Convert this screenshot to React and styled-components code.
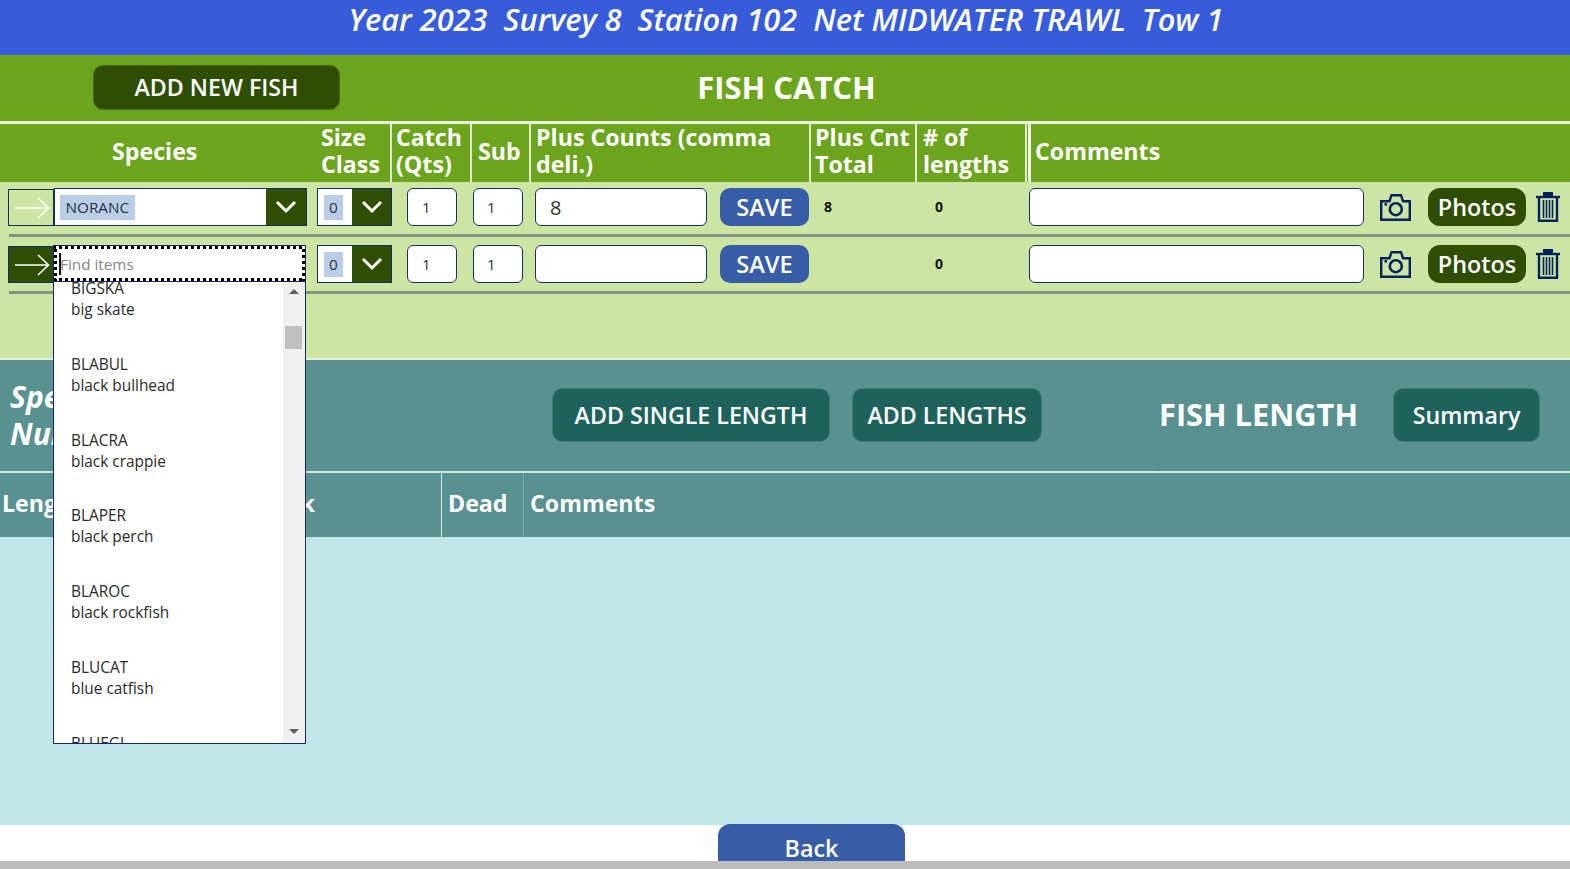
import React from "react";
import styled, { createGlobalStyle } from "styled-components";

const Global = createGlobalStyle`
  html, body { margin: 0; padding: 0; overflow: hidden; }
  body { font-family: "Open Sans", "Noto Sans", sans-serif; }
  * { box-sizing: border-box; }
`;

const Page = styled.div`
  position: relative;
  width: 1570px;
  height: 869px;
  overflow: hidden;
  background: #fff;
  display: flex;
  flex-direction: column;
`;

const TitleBar = styled.header`
  height: 55px;
  background: #375cdb;
  color: #fff;
  font-size: 30.8px;
  font-style: italic;
  font-weight: 600;
  text-align: center;
  line-height: 38px;
  padding-left: 2px;
  white-space: pre;
`;

const CatchBar = styled.div`
  height: 66px;
  background: #6ca41e;
  position: relative;
  display: flex;
  align-items: center;
  justify-content: center;
  padding: 0 0 2px 3px;
`;

const AddFish = styled.button`
  position: absolute;
  left: 93px;
  top: 10px;
  width: 247px;
  height: 45px;
  background: #2f4e03;
  color: #fff;
  border: 1px solid #4a6a1c;
  border-radius: 10px;
  font: 600 23.2px "Open Sans", sans-serif;
  padding: 0 0 2px;
`;

const BarTitle = styled.h1`
  margin: 0;
  color: #fff;
  font-size: 31px;
  font-weight: 700;
`;

const HeaderRow = styled.div`
  height: 61px;
  border-top: 3px solid #e8f2dc;
  background: #6ca41e;
  display: grid;
  grid-template-columns: 392px 80px 59px 280px 106px 110px 4px 1fr;
  color: #fff;
`;

const HeadCell = styled.div`
  border-right: ${(p) => (p.$plain ? "0" : "2px solid #dfeccb")};
  padding-left: ${(p) => p.$pad}px;
  padding-bottom: 6px;
  font-size: 23.2px;
  font-weight: 700;
  line-height: 27px;
  display: flex;
  align-items: center;
  white-space: pre;
`;

const SpeciesHead = styled(HeadCell)`
  display: grid;
  grid-template-columns: 321px 1fr;
  align-items: center;
`;

const SpeciesLabel = styled.div`
  padding-left: 112px;
`;

const HeadDivider = styled.div`
  margin-left: 1px;
  background: #f0f6e6;
`;

const Rows = styled.div`
  height: 176px;
  background: #cce5a3;
  padding-top: 6px;
`;

const Row = styled.div`
  height: 46px;
  padding-left: 8px;
  display: flex;
  align-items: flex-start;
`;

const Rule = styled.div`
  height: 3px;
  margin: 0 0 8px 9px;
  background: #83927a;
`;

const ArrowBox = styled.div`
  width: 46px;
  height: 37px;
  margin-top: 1px;
  padding-left: 2px;
  border: 1px solid #14305f;
  background: ${(p) => (p.$active ? "#2f4e03" : "#cce5a3")};
  display: flex;
  align-items: center;
  justify-content: center;
`;

const Combo = styled.div`
  width: ${(p) => p.$w}px;
  height: 38px;
  margin-left: ${(p) => p.$ml || 0}px;
  border: 1px solid #14305f;
  background: #fff;
  display: flex;
  align-items: center;
  justify-content: space-between;
`;

const Selected = styled.span`
  margin-left: ${(p) => p.$ml}px;
  padding: 0 ${(p) => p.$px}px;
  height: ${(p) => p.$h}px;
  line-height: ${(p) => p.$h}px;
  background: #b9cde6;
  color: #27323f;
  font-size: 15.3px;
`;

const ComboArrow = styled.div`
  width: ${(p) => p.$w}px;
  align-self: stretch;
  background: #2f4e03;
  display: flex;
  align-items: center;
  justify-content: center;
`;

const Spacer = styled.div`
  width: 253px;
`;

const SmallInput = styled.div`
  width: ${(p) => p.$w}px;
  height: 38px;
  margin-left: ${(p) => p.$ml}px;
  border: 1px solid #14305f;
  border-radius: 6px;
  background: #fff;
  color: #333;
  font-size: 15px;
  line-height: 37px;
  padding-left: ${(p) => p.$pl}px;
`;

const PlusInput = styled(SmallInput)`
  font-size: 20px;
`;

const SaveButton = styled.button`
  width: 89px;
  height: 38px;
  margin-left: 13px;
  border: 0;
  border-radius: 10px;
  background: #375da9;
  color: #fff;
  padding: 0;
  font: 600 23.6px "Open Sans", sans-serif;
`;

const Count = styled.div`
  width: ${(p) => p.$w}px;
  height: 38px;
  padding-left: ${(p) => p.$pl}px;
  color: #111;
  font-size: 14px;
  font-weight: 700;
  line-height: 37px;
`;

const IconSlot = styled.div`
  width: ${(p) => p.$w}px;
  margin-left: ${(p) => p.$ml}px;
  height: 38px;
  display: flex;
  align-items: center;
  justify-content: center;
`;

const PhotosButton = styled.button`
  width: 98px;
  height: 38px;
  margin-left: 17px;
  border: 0;
  border-radius: 12px;
  background: #2f4e03;
  color: #fff;
  padding: 0;
  font: 600 23.4px "Open Sans", sans-serif;
`;

const TealBand = styled.div`
  height: 113px;
  border-top: 2px solid #e5f2df;
  background: #58918f;
  display: flex;
  align-items: center;
  padding-bottom: 2px;
  color: #fff;
`;

const SpeciesNumber = styled.div`
  width: 552px;
  padding-left: 10px;
  font-size: 30px;
  font-weight: 700;
  font-style: italic;
  line-height: 37px;
  white-space: pre;
`;

const TealButton = styled.button`
  width: ${(p) => p.$w}px;
  height: 54px;
  margin-left: ${(p) => p.$ml || 0}px;
  border: 1px solid #3f7f78;
  border-radius: 10px;
  background: #1f625c;
  color: #fff;
  padding: 0;
  font: 600 23.2px "Open Sans", sans-serif;
`;

const BandTitle = styled.div`
  align-self: stretch;
  width: 240px;
  margin-left: 111px;
  margin-bottom: -2px;
  padding: 0 0 4px 5px;
  border-left: 1px solid #5e9694;
  display: flex;
  align-items: center;
  font-size: 30.8px;
  font-weight: 700;
  white-space: pre;
`;

const TableHead = styled.div`
  height: 66px;
  border-top: 2px solid #cfe6e1;
  background: #58918f;
  color: #fff;
  display: grid;
  grid-template-columns: 442px 82px 1fr;
`;

const TableCell = styled.div`
  border-right: ${(p) => (p.$line ? `1px solid ${p.$line}` : "0")};
  padding: 0 ${(p) => p.$pr || 0}px 4px ${(p) => p.$pl}px;
  font-size: 23.2px;
  font-weight: 700;
  display: flex;
  align-items: center;
  justify-content: space-between;
  white-space: pre;
`;

const TableBody = styled.div`
  height: 288px;
  background: #c1e6e7;
`;

const Footer = styled.div`
  flex: 1;
  position: relative;
  background: #fff;
`;

const BackButton = styled.button`
  position: absolute;
  left: 718px;
  top: -1px;
  width: 187px;
  height: 38px;
  border: 0;
  border-radius: 12px 12px 0 0;
  background: #375da9;
  color: #fff;
  padding: 8px 0 0;
  font: 600 23.3px "Open Sans", sans-serif;
`;

const GreyStrip = styled.div`
  position: absolute;
  left: 0;
  right: 0;
  bottom: 0;
  height: 8px;
  background: #bdbdbd;
`;

const Dropdown = styled.div`
  position: absolute;
  left: 53px;
  top: 245px;
  width: 253px;
  height: 499px;
  background: #fff;
  border: 1px solid #14246f;
  border-top: 0;
  display: flex;
  flex-direction: column;
`;

const SearchBox = styled.div`
  height: 37px;
  margin: 0 -1px;
  outline: 1px solid #14246f;
  outline-offset: -1px;
  background-color: #fff;
  background-image:
    repeating-linear-gradient(90deg, #000 0 3px, transparent 3px 6px),
    repeating-linear-gradient(90deg, #000 0 3px, transparent 3px 6px),
    repeating-linear-gradient(0deg, #000 0 3px, transparent 3px 6px),
    repeating-linear-gradient(0deg, #000 0 3px, transparent 3px 6px);
  background-size: 100% 4px, 100% 4px, 4px 100%, 4px 100%;
  background-position: 0 0, 0 100%, 0 0, 100% 0;
  background-repeat: no-repeat;
  color: #858585;
  font-size: 15.3px;
  line-height: 38px;
  padding-left: 7px;
  position: relative;
`;

const Caret = styled.span`
  position: absolute;
  left: 6px;
  top: 8px;
  width: 2px;
  height: 22px;
  background: #111;
`;

const ListArea = styled.div`
  flex: 1;
  min-height: 0;
  display: flex;
  overflow: hidden;
`;

const List = styled.div`
  flex: 1;
  overflow: hidden;
  padding: 0 0 0 17px;
`;

const ListScroll = styled.div`
  margin-top: -4px;
`;

const Item = styled.div`
  height: 75.8px;
  color: #2a2a2a;
  font-size: 15.4px;
  line-height: 21px;
  white-space: pre;
`;

const Scrollbar = styled.div`
  width: 22px;
  background: #f0f0f0;
  position: relative;
  display: flex;
  flex-direction: column;
  align-items: center;
  justify-content: space-between;
  padding: 7px 0 9px;
`;

const Thumb = styled.div`
  position: absolute;
  left: 2px;
  top: 44px;
  width: 17px;
  height: 23px;
  background: #c0c0c0;
`;

const Tri = styled.span`
  width: 0;
  height: 0;
  border-left: 5px solid transparent;
  border-right: 5px solid transparent;
  ${(p) => (p.$up ? "border-bottom: 5px solid #606060;" : "border-top: 5px solid #606060;")}
`;

const LongArrow = () => (
  <svg width="36" height="22" viewBox="0 0 36 22" fill="none" stroke="#fff" strokeWidth="1.6">
    <path d="M1 11H34.5M24 1l10.5 10L24 21" />
  </svg>
);

const Chevron = () => (
  <svg width="22" height="14" viewBox="0 0 22 14" fill="none" stroke="#fff" strokeWidth="3">
    <path d="M2 2l9 9 9-9" />
  </svg>
);

const Camera = () => (
  <svg width="31" height="27" viewBox="0 0 31 27" fill="none" stroke="#06215f" strokeWidth="2.4">
    <path d="M1.2 7.2H9.5L11.5 1.2H21L23 7.2H29.8V25.8H1.2Z" />
    <circle cx="15.8" cy="15.2" r="6" strokeWidth="2.6" />
    <rect x="4.5" y="9" width="2.6" height="2.6" fill="#06215f" stroke="none" />
  </svg>
);

const Trash = () => (
  <svg width="24" height="30" viewBox="0 0 24 30" fill="none" stroke="#06215f" strokeWidth="1.6">
    <path d="M0 5h24" strokeWidth="2.4" />
    <path d="M7 0h10v4H7z" fill="#06215f" stroke="none" />
    <path d="M3 5v23.8h18V5" strokeWidth="2.4" />
    <path d="M7.5 8v18M10.5 8v18M13.5 8v18M16.5 8v18" />
  </svg>
);

const species = [
  "BIGSKA\nbig skate",
  "BLABUL\nblack bullhead",
  "BLACRA\nblack crappie",
  "BLAPER\nblack perch",
  "BLAROC\nblack rockfish",
  "BLUCAT\nblue catfish",
  "BLUEGI\nbluegill",
];

const FishRow = ({ active, value, total }) => (
  <Row>
    <ArrowBox $active={active}><LongArrow /></ArrowBox>
    {active ? (
      <Spacer />
    ) : (
      <Combo $w={253}>
        <Selected $ml={5} $px={5.5} $h={25}>NORANC</Selected>
        <ComboArrow $w={40}><Chevron /></ComboArrow>
      </Combo>
    )}
    <Combo $w={75} $ml={10}>
      <Selected $ml={6} $px={5} $h={25}>0</Selected>
      <ComboArrow $w={39}><Chevron /></ComboArrow>
    </Combo>
    <SmallInput $w={50} $ml={15} $pl={14}>1</SmallInput>
    <SmallInput $w={50} $ml={16} $pl={13}>1</SmallInput>
    <PlusInput $w={172} $ml={12} $pl={14}>{value}</PlusInput>
    <SaveButton>SAVE</SaveButton>
    <Count $w={108} $pl={15}>{total}</Count>
    <Count $w={112} $pl={18}>0</Count>
    <SmallInput $w={335} $ml={0} $pl={0} />
    <IconSlot $w={31} $ml={16}><Camera /></IconSlot>
    <PhotosButton>Photos</PhotosButton>
    <IconSlot $w={24} $ml={10}><Trash /></IconSlot>
  </Row>
);

export default function App() {
  return (
    <Page>
      <Global />
      <TitleBar>{"Year 2023  Survey 8  Station 102  Net MIDWATER TRAWL  Tow 1"}</TitleBar>
      <CatchBar>
        <AddFish>ADD NEW FISH</AddFish>
        <BarTitle>FISH CATCH</BarTitle>
      </CatchBar>
      <HeaderRow>
        <SpeciesHead $pad={0}>
          <SpeciesLabel>Species</SpeciesLabel>
          <div>{"Size\nClass"}</div>
        </SpeciesHead>
        <HeadCell $pad={4}>{"Catch\n(Qts)"}</HeadCell>
        <HeadCell $pad={6}>{"Sub"}</HeadCell>
        <HeadCell $pad={5}>{"Plus Counts (comma\ndeli.)"}</HeadCell>
        <HeadCell $pad={4}>{"Plus Cnt\nTotal"}</HeadCell>
        <HeadCell $pad={6}>{"# of\nlengths"}</HeadCell>
        <HeadDivider />
        <HeadCell $plain $pad={4}>Comments</HeadCell>
      </HeaderRow>
      <Rows>
        <FishRow value="8" total="8" />
        <Rule />
        <FishRow active value="" total="" />
        <Rule />
      </Rows>
      <TealBand>
        <SpeciesNumber>{"Species\nNumber"}</SpeciesNumber>
        <TealButton $w={278}>ADD SINGLE LENGTH</TealButton>
        <TealButton $w={190} $ml={22}>ADD LENGTHS</TealButton>
        <BandTitle>FISH LENGTH</BandTitle>
        <TealButton $w={147}>Summary</TealButton>
      </TealBand>
      <TableHead>
        <TableCell $pl={2} $pr={126} $line="#d6e9e5">
          <span>Length</span>
          <span>Mark</span>
        </TableCell>
        <TableCell $pl={6} $line="#7aa9a6">Dead</TableCell>
        <TableCell $pl={6}>Comments</TableCell>
      </TableHead>
      <TableBody />
      <Footer>
        <BackButton>Back</BackButton>
        <GreyStrip />
      </Footer>
      <Dropdown>
        <SearchBox><Caret />Find items</SearchBox>
        <ListArea>
          <List>
            <ListScroll>
              {species.map((s) => <Item key={s}>{s}</Item>)}
            </ListScroll>
          </List>
          <Scrollbar>
            <Tri $up />
            <Thumb />
            <Tri />
          </Scrollbar>
        </ListArea>
      </Dropdown>
    </Page>
  );
}
